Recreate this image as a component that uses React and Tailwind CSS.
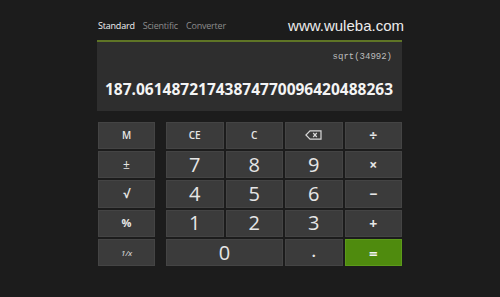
import React from "react";

const font = { fontFamily: '"Open Sans", "Noto Sans", sans-serif' };

function Btn({ children, className = "" }) {
  return (
    <div
      className={
        "flex items-center justify-center bg-[#3b3b3b] border border-[#444444] text-[#e6e6e6] " +
        className
      }
    >
      {children}
    </div>
  );
}

function Backspace() {
  return (
    <svg width="17" height="10" viewBox="0 0 17 10" fill="none" stroke="#d8d8d8" strokeWidth="1.2">
      <path d="M5 0.8 H16 V9.2 H5 L0.9 5 Z" />
      <path d="M8.2 3 L11.8 7 M11.8 3 L8.2 7" />
    </svg>
  );
}

export default function App() {
  return (
    <div className="w-[500px] h-[297px] bg-[#1c1c1c] overflow-hidden" style={font}>
      <div className="ml-[97px] w-[305px] pt-[16px]">
        <div className="flex items-center justify-between h-[18px]">
          <div className="flex gap-[8px] text-[9px] tracking-[-0.2px] pl-[1px] leading-none">
            <span className="text-[#f2f2f2]">Standard</span>
            <span className="text-[#8c8c8c]">Scientific</span>
            <span className="text-[#8c8c8c]">Converter</span>
          </div>
          <span
            className="text-[15px] text-[#ececec] leading-none mr-[-2px]"
            style={{ fontFamily: '"Liberation Sans", Arial, sans-serif' }}
          >
            www.wuleba.com
          </span>
        </div>
        <div className="mt-[6px] h-[1.5px] bg-[#5f7526]" />
        <div className="h-[69px] bg-[#2e2e2e] flex flex-col items-end pr-[9px]">
          <div
            className="mt-[11px] text-[9px] leading-none text-[#bdbdbd] pr-[1px]"
            style={{ fontFamily: '"Liberation Mono", "DejaVu Sans Mono", monospace' }}
          >
            sqrt(34992)
          </div>
          <div className="mt-[20px] text-[15.5px] font-bold leading-none text-[#f4f4f4]">
            187.06148721743874770096420488263
          </div>
        </div>
        <div className="mt-[11px] flex pl-[1px] gap-[11px]">
          <div className="w-[57px] h-[145px] grid grid-rows-5 gap-[2px]">
            <Btn className="text-[10px] font-semibold">M</Btn>
            <Btn className="text-[12px]">±</Btn>
            <Btn className="text-[12px] font-bold">√</Btn>
            <Btn className="text-[11px] font-bold">%</Btn>
            <Btn className="text-[8px] text-[#bdbdbd] italic">1/x</Btn>
          </div>
          <div className="w-[236px] h-[145px] grid grid-cols-4 grid-rows-5 gap-[2px]">
            <Btn className="text-[10px] font-semibold">CE</Btn>
            <Btn className="text-[10px] font-semibold">C</Btn>
            <Btn><Backspace /></Btn>
            <Btn className="text-[14px] font-bold">÷</Btn>

            <Btn className="text-[20px]">7</Btn>
            <Btn className="text-[20px]">8</Btn>
            <Btn className="text-[20px]">9</Btn>
            <Btn className="text-[14px] font-bold">×</Btn>

            <Btn className="text-[20px]">4</Btn>
            <Btn className="text-[20px]">5</Btn>
            <Btn className="text-[20px]">6</Btn>
            <Btn className="text-[14px] font-bold">−</Btn>

            <Btn className="text-[20px]">1</Btn>
            <Btn className="text-[20px]">2</Btn>
            <Btn className="text-[20px]">3</Btn>
            <Btn className="text-[14px] font-bold">+</Btn>

            <Btn className="col-span-2 text-[20px]">0</Btn>
            <Btn className="text-[14px] font-bold items-end pb-[3px]">.</Btn>
            <div className="flex items-center justify-center bg-[#4f8b0e] border border-[#5c9a1a] text-[#f2f2f2] text-[15px] font-bold">
              =
            </div>
          </div>
        </div>
      </div>
    </div>
  );
}
